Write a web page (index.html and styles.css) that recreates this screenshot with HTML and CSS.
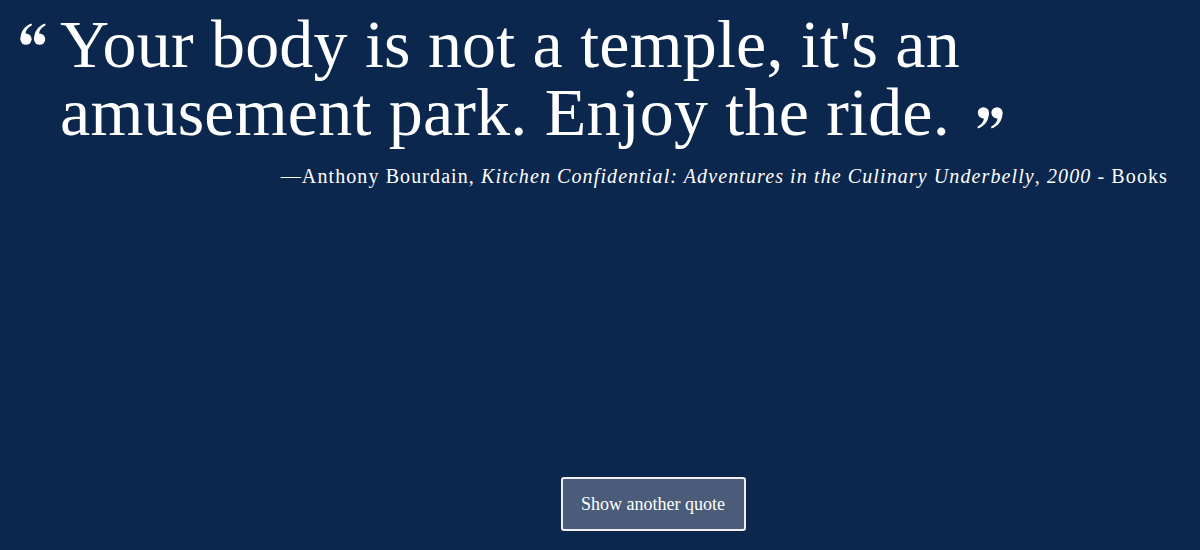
FILE: index.html
```html
<!DOCTYPE html>
<html>
<head>
<meta charset="utf-8">
<link rel="stylesheet" href="styles.css">
</head>
<body>
<main class="page">
  <blockquote class="quote">
    <div class="quote-line">
      <svg class="mark mark-open" viewBox="0 0 26 22" width="26" height="22"><g fill="#fff"><circle cx="6" cy="16.2" r="5.6"/><path d="M0.6 16.5 C0.4 8.5 4.5 3 11.5 0.5 L12 2.2 C7.5 4.5 5.4 8 5.6 11.2 Z"/><circle cx="19.6" cy="16.2" r="5.6"/><path d="M14.2 16.5 C14 8.5 18.1 3 25.1 0.5 L25.6 2.2 C21.1 4.5 19 8 19.2 11.2 Z"/></g></svg>
      <p class="quote-text">Your body is not a temple, it's an amusement park. Enjoy the ride.&#8288;<svg class="mark mark-close" viewBox="0 0 26 22" width="26" height="22"><g fill="#fff" transform="rotate(180 13 11)"><circle cx="6" cy="16.2" r="5.6"/><path d="M0.6 16.5 C0.4 8.5 4.5 3 11.5 0.5 L12 2.2 C7.5 4.5 5.4 8 5.6 11.2 Z"/><circle cx="19.6" cy="16.2" r="5.6"/><path d="M14.2 16.5 C14 8.5 18.1 3 25.1 0.5 L25.6 2.2 C21.1 4.5 19 8 19.2 11.2 Z"/></g></svg></p>
    </div>
    <footer class="cite">—Anthony Bourdain, <em>Kitchen Confidential: Adventures in the Culinary Underbelly</em>, <em>2000</em> - Books</footer>
  </blockquote>
  <div class="actions">
    <button class="btn">Show another quote</button>
  </div>
</main>
</body>
</html>
```
FILE: styles.css
```css
html, body {
  margin: 0;
  padding: 0;
  background: #0b274d;
  height: 100%;
}
.page {
  height: 550px;
  display: flex;
  flex-direction: column;
  color: #fff;
  font-family: "Liberation Serif", "DejaVu Serif", serif;
}
.quote {
  margin: 0;
  padding: 10px 32px 0 20px;
}
.quote-line {
  display: flex;
  align-items: flex-start;
}
.mark-open {
  flex: none;
  margin-top: 13px;
  margin-right: 14px;
}
.quote-text {
  margin: 0;
  font-size: 68px;
  line-height: 68px;
  letter-spacing: 0.2px;
  width: 1000px;
}
.mark-close {
  vertical-align: 6px;
  margin-left: 27px;
}
.cite {
  text-align: right;
  font-size: 20px;
  letter-spacing: 1.1px;
  margin-top: 19px;
}
.cite em {
  font-style: italic;
}
.actions {
  margin-top: auto;
  display: flex;
  justify-content: center;
  padding-bottom: 19px;
  padding-left: 106px;
}
.btn {
  font-family: "Liberation Serif", serif;
  font-size: 18px;
  color: #fff;
  background: #4b5c7a;
  border: 2px solid #f0f0f0;
  border-radius: 3px;
  width: 185px;
  height: 54px;
}
```
